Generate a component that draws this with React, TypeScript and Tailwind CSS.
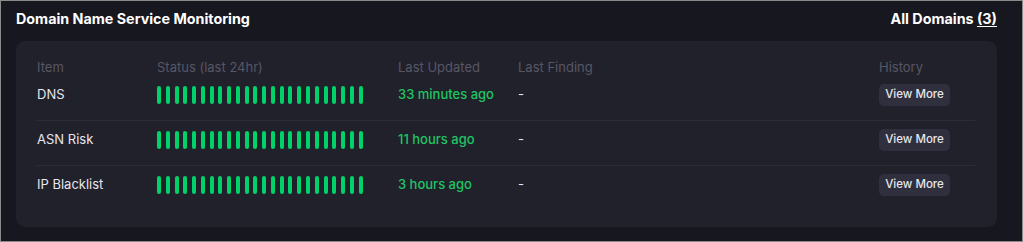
import React from "react";

const rows = [
  { item: "DNS", updated: "33 minutes ago" },
  { item: "ASN Risk", updated: "11 hours ago" },
  { item: "IP Blacklist", updated: "3 hours ago" },
];

function Bars() {
  return (
    <div className="flex gap-[4.77px]">
      {Array.from({ length: 24 }).map((_, i) => (
        <div key={i} className="w-[4px] h-[18px] rounded-full bg-[#00d26a]" />
      ))}
    </div>
  );
}

export default function App() {
  return (
    <div
      className="w-[1023px] h-[242px] bg-[#17171f] border border-[#8a8a8a] overflow-hidden"
      style={{ fontFamily: "Inter, 'Noto Sans', sans-serif" }}
    >
      <div className="pl-[15px] pr-[25px] pt-[8px]">
        <div className="flex items-center justify-between h-[20px] text-[14.3px] font-bold text-white">
          <span>Domain Name Service Monitoring</span>
          <span>
            All Domains <span className="underline underline-offset-2">(3)</span>
          </span>
        </div>
        <div className="mt-[12px] h-[186px] rounded-[9px] bg-[#21212c] pl-[21px] pr-[22px] pt-[19px]">
          <div className="flex h-[16px] items-center text-[13px] text-[#575764]">
            <div className="w-[120px]">Item</div>
            <div className="w-[241px]">Status (last 24hr)</div>
            <div className="w-[120px]">Last Updated</div>
            <div className="w-[361px]">Last Finding</div>
            <div>History</div>
          </div>
          {rows.map((r, i) => (
            <div
              key={r.item}
              className={
                i === 0
                  ? "flex items-center h-[22px] mt-[8px] mb-[14px] text-[13px]"
                  : "flex items-center h-[22px] pt-[8px] pb-[14px] border-t border-[#2d2d39] text-[13px] box-content"
              }
            >
              <div className="w-[120px] text-[#e6e6ec]">{r.item}</div>
              <div className="w-[241px]">
                <Bars />
              </div>
              <div className="w-[120px] text-[#1fc463] font-medium">{r.updated}</div>
              <div className="w-[361px] text-[#e6e6ec]">-</div>
              <div>
                <button className="w-[71px] h-[22px] rounded-[5px] bg-[#2f2f3e] text-[11.5px] font-medium text-[#e6e6ec]">
                  View More
                </button>
              </div>
            </div>
          ))}
        </div>
      </div>
    </div>
  );
}
